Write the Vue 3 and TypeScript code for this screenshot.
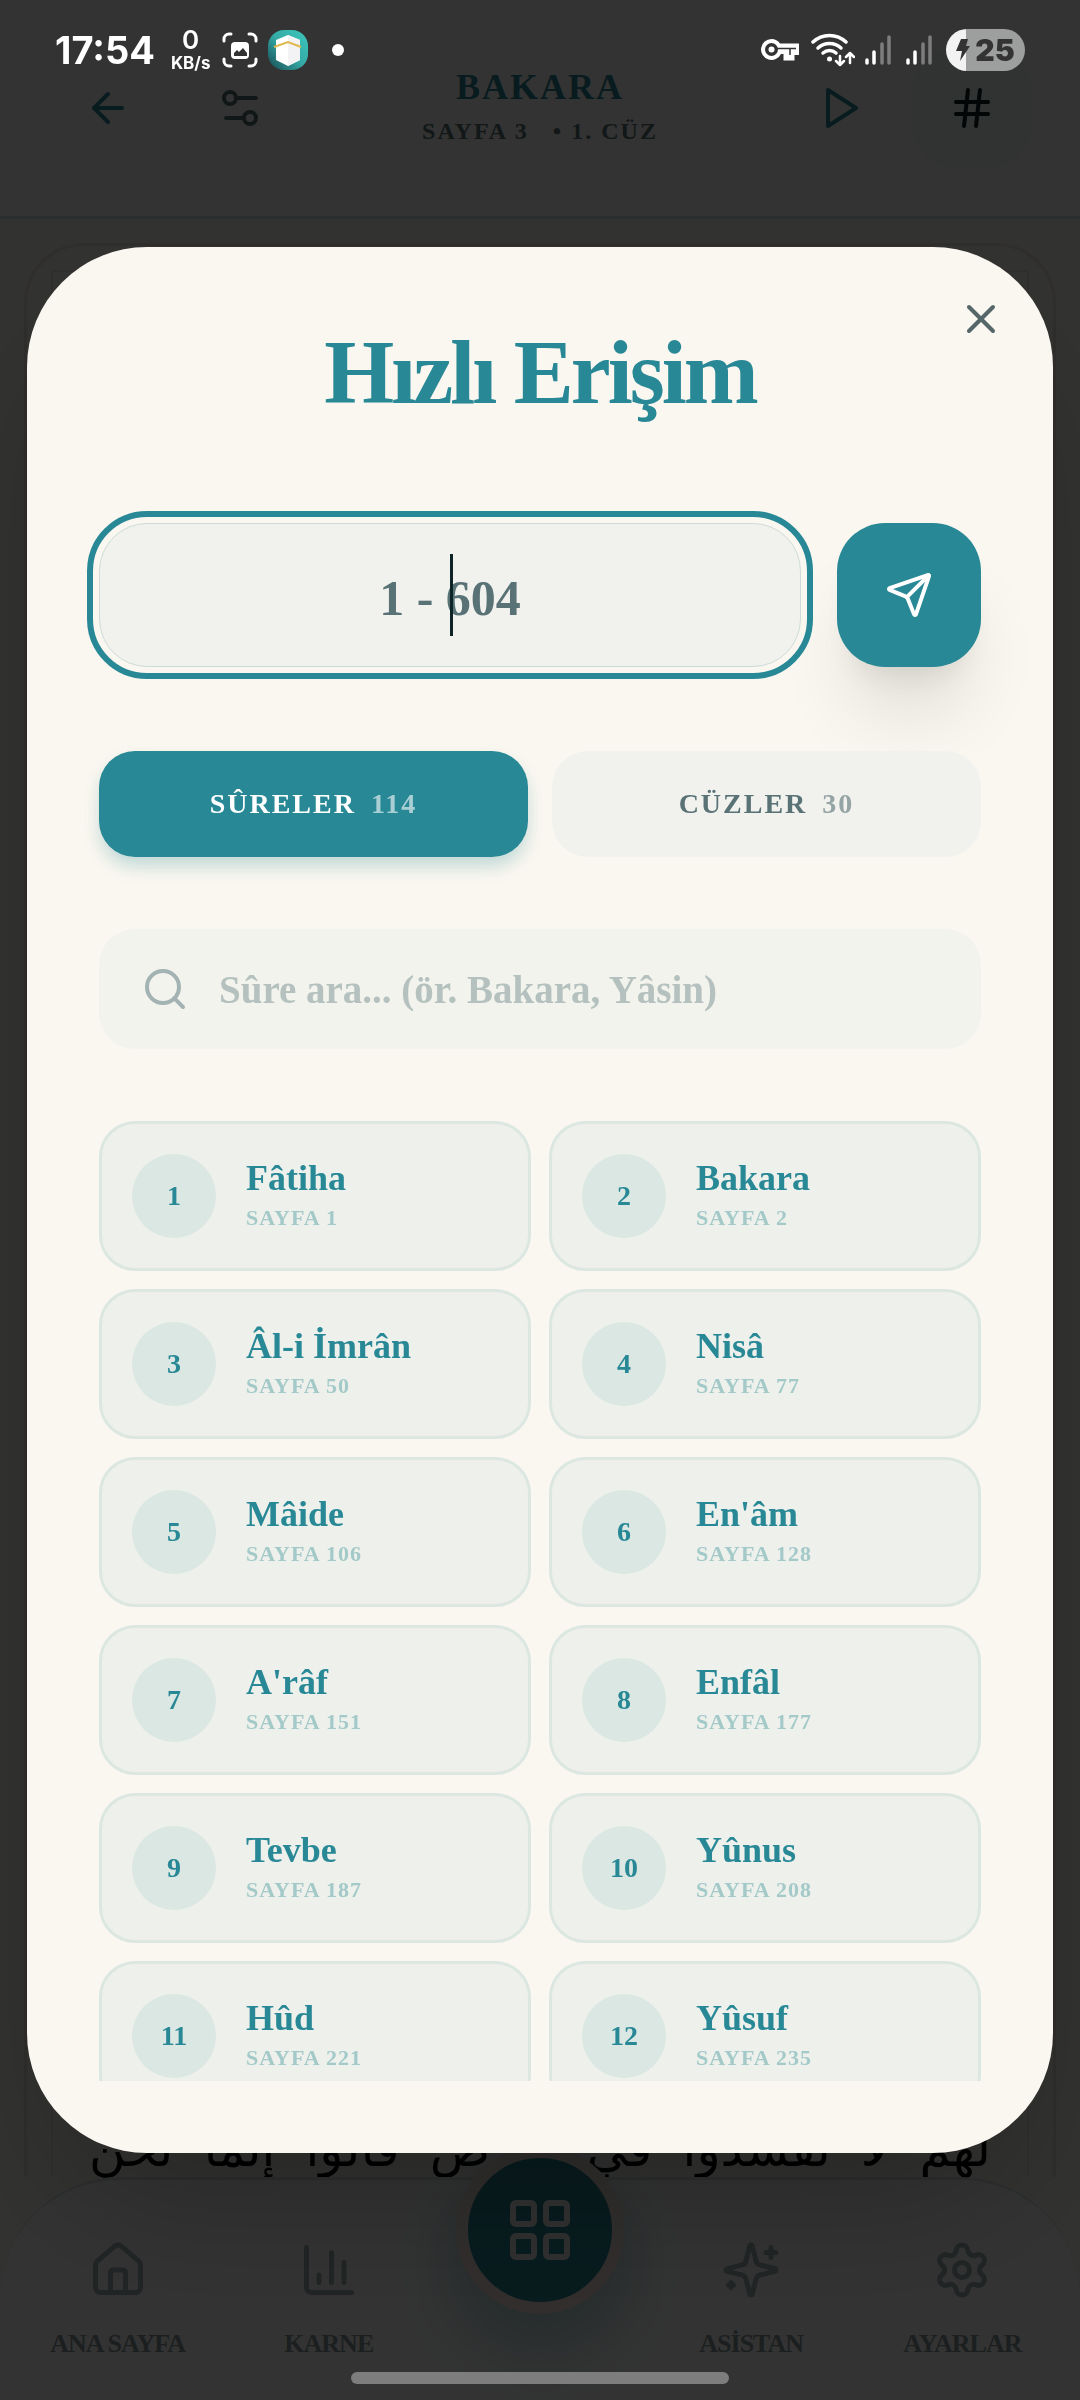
<script setup lang="ts">
import { ref } from 'vue'

interface Surah {
  no: number
  name: string
  page: number
}

interface NavItem {
  label: string
  paths: string[]
}

const surahs: Surah[] = [
  { no: 1, name: 'Fâtiha', page: 1 },
  { no: 2, name: 'Bakara', page: 2 },
  { no: 3, name: 'Âl-i İmrân', page: 50 },
  { no: 4, name: 'Nisâ', page: 77 },
  { no: 5, name: 'Mâide', page: 106 },
  { no: 6, name: "En'âm", page: 128 },
  { no: 7, name: "A'râf", page: 151 },
  { no: 8, name: 'Enfâl', page: 177 },
  { no: 9, name: 'Tevbe', page: 187 },
  { no: 10, name: 'Yûnus', page: 208 },
  { no: 11, name: 'Hûd', page: 221 },
  { no: 12, name: 'Yûsuf', page: 235 },
]

const leftNav: NavItem[] = [
  {
    label: 'ANA SAYFA',
    paths: [
      'M15 21v-8a1 1 0 0 0-1-1h-4a1 1 0 0 0-1 1v8',
      'M3 10a2 2 0 0 1 .709-1.528l7-5.999a2 2 0 0 1 2.582 0l7 5.999A2 2 0 0 1 21 10v9a2 2 0 0 1-2 2H5a2 2 0 0 1-2-2z',
    ],
  },
  {
    label: 'KARNE',
    paths: ['M3 3v16a2 2 0 0 0 2 2h16', 'M18 17V9', 'M13 17V5', 'M8 17v-3'],
  },
]

const rightNav: NavItem[] = [
  {
    label: 'ASİSTAN',
    paths: [
      'M9.937 15.5A2 2 0 0 0 8.5 14.063l-6.135-1.582a.5.5 0 0 1 0-.962L8.5 9.936A2 2 0 0 0 9.937 8.5l1.582-6.135a.5.5 0 0 1 .963 0L14.063 8.5A2 2 0 0 0 15.5 9.937l6.135 1.581a.5.5 0 0 1 0 .964L15.5 14.063a2 2 0 0 0-1.437 1.437l-1.582 6.135a.5.5 0 0 1-.963 0z',
      'M20 3v4',
      'M22 5h-4',
      'M4 17v2',
      'M5 18H3',
    ],
  },
  {
    label: 'AYARLAR',
    paths: [
      'M9.671 4.136a2.34 2.34 0 0 1 4.659 0 2.34 2.34 0 0 0 3.319 1.915 2.34 2.34 0 0 1 2.33 4.033 2.34 2.34 0 0 0 0 3.831 2.34 2.34 0 0 1-2.33 4.033 2.34 2.34 0 0 0-3.319 1.915 2.34 2.34 0 0 1-4.659 0 2.34 2.34 0 0 0-3.32-1.915 2.34 2.34 0 0 1-2.33-4.033 2.34 2.34 0 0 0 0-3.831A2.34 2.34 0 0 1 6.35 6.051a2.34 2.34 0 0 0 3.319-1.915',
      'M9 12a3 3 0 1 0 6 0a3 3 0 1 0-6 0',
    ],
  },
]

const page = ref('')
const query = ref('')
const tab = ref<'sure' | 'cuz'>('sure')
</script>

<template>
  <div class="app">
    <header class="top-bar">
      <div class="group">
        <button class="icon-btn" type="button" aria-label="Geri">
          <svg class="icon" viewBox="0 0 24 24"><path d="m12 19-7-7 7-7" /><path d="M19 12H5" /></svg>
        </button>
        <button class="icon-btn muted" type="button" aria-label="Görünüm ayarları">
          <svg class="icon" viewBox="0 0 24 24">
            <path d="M20 7h-9" /><path d="M14 17H5" /><circle cx="17" cy="17" r="3" /><circle cx="7" cy="7" r="3" />
          </svg>
        </button>
      </div>
      <div class="heading">
        <h1>BAKARA</h1>
        <p><span>SAYFA 3</span><span>• 1. CÜZ</span></p>
      </div>
      <div class="group">
        <button class="icon-btn" type="button" aria-label="Oynat">
          <svg class="icon" viewBox="0 0 24 24"><path d="M6 3 20 12 6 21z" /></svg>
        </button>
        <button class="icon-btn active" type="button" aria-label="Hızlı Erişim">
          <svg class="icon" viewBox="0 0 24 24">
            <path d="M4 9h16" /><path d="M4 15h16" /><path d="M10 3 8 21" /><path d="M16 3l-2 18" />
          </svg>
        </button>
      </div>
    </header>

    <main class="reader">
      <div class="sheet">
        <div class="sheet-inner">
          <p class="ayah" lang="ar" dir="rtl">لهم لا تفسدوا في الأرض قالوا إنما نحن</p>
        </div>
      </div>
    </main>

    <nav class="bottom-nav">
      <a v-for="item in leftNav" :key="item.label" class="nav-item" href="#">
        <svg class="icon nav-icon" viewBox="0 0 24 24"><path v-for="d in item.paths" :key="d" :d="d" /></svg>
        <span>{{ item.label }}</span>
      </a>
      <div class="fab-slot">
        <button class="fab" type="button" aria-label="Menü">
          <svg class="icon fab-icon" viewBox="0 0 24 24">
            <rect x="3" y="3" width="7" height="7" rx="1" /><rect x="14" y="3" width="7" height="7" rx="1" />
            <rect x="14" y="14" width="7" height="7" rx="1" /><rect x="3" y="14" width="7" height="7" rx="1" />
          </svg>
        </button>
      </div>
      <a v-for="item in rightNav" :key="item.label" class="nav-item" href="#">
        <svg class="icon nav-icon" viewBox="0 0 24 24"><path v-for="d in item.paths" :key="d" :d="d" /></svg>
        <span>{{ item.label }}</span>
      </a>
    </nav>

    <div class="overlay">
      <section class="dialog" role="dialog" aria-modal="true" aria-labelledby="dialog-title">
        <button class="close" type="button" aria-label="Kapat">
          <svg class="icon" viewBox="0 0 24 24"><path d="M18 6 6 18" /><path d="m6 6 12 12" /></svg>
        </button>
        <h2 id="dialog-title">Hızlı Erişim</h2>

        <form class="jump" @submit.prevent>
          <div class="page-field">
            <input v-model="page" type="text" inputmode="numeric" placeholder="1 - 604" aria-label="Sayfa numarası" />
            <span class="caret"></span>
          </div>
          <button class="send" type="submit" aria-label="Git">
            <svg class="icon" viewBox="0 0 24 24">
              <path d="M14.536 21.686a.5.5 0 0 0 .937-.024l6.5-19a.496.496 0 0 0-.635-.635l-19 6.5a.5.5 0 0 0-.024.937l7.93 3.18a2 2 0 0 1 1.112 1.11z" />
              <path d="m21.854 2.147-10.94 10.939" />
            </svg>
          </button>
        </form>

        <div class="tabs">
          <button type="button" :class="{ on: tab === 'sure' }" @click="tab = 'sure'">
            SÛRELER <span>114</span>
          </button>
          <button type="button" :class="{ on: tab === 'cuz' }" @click="tab = 'cuz'">
            CÜZLER <span>30</span>
          </button>
        </div>

        <label class="search">
          <svg class="icon" viewBox="0 0 24 24"><circle cx="11" cy="11" r="8" /><path d="m21 21-4.300-4.300" /></svg>
          <input v-model="query" type="text" placeholder="Sûre ara... (ör. Bakara, Yâsin)" aria-label="Sûre ara" />
        </label>

        <div class="list">
          <button v-for="s in surahs" :key="s.no" class="card" type="button">
            <span class="num">{{ s.no }}</span>
            <span class="info">
              <strong>{{ s.name }}</strong>
              <small>SAYFA {{ s.page }}</small>
            </span>
          </button>
        </div>
      </section>
    </div>

    <div class="status">
      <div class="status-left">
        <span class="time">17:54</span>
        <span class="rate"><b>0</b><span>KB/s</span></span>
        <svg class="shot" viewBox="0 0 36 36">
          <path d="M2 9V7a5 5 0 0 1 5-5h2M27 2h2a5 5 0 0 1 5 5v2M34 27v2a5 5 0 0 1-5 5h-2M9 34H7a5 5 0 0 1-5-5v-2" fill="none" stroke="#fff" stroke-width="3" stroke-linecap="round" />
          <rect x="9" y="10" width="18" height="17" rx="4" fill="#fff" />
          <path d="M12 24v-3l3-3 2 2 4-4 4 5v3z" fill="#333" />
        </svg>
        <svg class="kaaba" viewBox="0 0 40 40">
          <defs>
            <linearGradient id="tile" x1="1" y1="0" x2="0" y2="1">
              <stop offset="0" stop-color="#3cc8be" /><stop offset=".5" stop-color="#35a9a6" /><stop offset="1" stop-color="#17484f" />
            </linearGradient>
          </defs>
          <rect width="40" height="40" rx="16" fill="url(#tile)" />
          <path d="M20 5 32 10v20l-12 6-12-6V10z" fill="#fff" />
          <path d="M20 5 32 10v20l-12 6z" fill="#f3f3f5" />
          <path d="m6 17 14-5 13 5" fill="none" stroke="#e0b94f" stroke-width="2" />
        </svg>
        <span class="dot"></span>
      </div>
      <div class="status-right">
        <svg class="key" viewBox="0 0 38 22">
          <path fill-rule="evenodd" d="M10.500 0a10.500 10.500 0 1 0 9.500 15h2.500v6.500h11V16H38V4.500H19A10.500 10.500 0 0 0 10.500 0zm0 4a6.500 6.500 0 1 1 0 13 6.500 6.500 0 0 1 0-13z" fill="#fff" />
          <path d="M16 9.500h19M29 9.500V16" fill="none" stroke="#333" stroke-width="1.500" />
          <circle cx="10.500" cy="10.500" r="3" fill="#fff" />
        </svg>
        <svg class="wifi" viewBox="0 0 44 34">
          <g fill="none" stroke="#fff" stroke-width="3.500" stroke-linecap="round">
            <path d="M2 9a24 24 0 0 1 33 0" /><path d="M7 15a17 17 0 0 1 23 0" /><path d="M12 20a10 10 0 0 1 13 0" />
            <path d="M29 23v9m-4-4 4 4 4-4M39 30V20m-4 4 4-4 4 4" stroke-width="2.500" stroke-linejoin="round" />
          </g>
          <circle cx="18.500" cy="26" r="2.500" fill="#fff" />
        </svg>
        <svg v-for="n in 2" :key="n" class="signal" viewBox="0 0 28 30" stroke-width="3.500" stroke-linecap="round">
          <path d="M3 25v3M10 17v11" stroke="#fff" /><path d="M18 9v19M25 2v26" stroke="#7d7d7d" />
        </svg>
        <span class="battery">
          <svg viewBox="0 0 14 22"><path d="M5 0h7l-2 7h4L4 22l2-10H0z" fill="#333" /></svg>
          <b>25</b>
        </span>
      </div>
    </div>
    <span class="gesture"></span>
  </div>
</template>

<style>
body {
  margin: 0;
}
</style>

<style scoped>
* {
  box-sizing: border-box;
}
button,
input {
  font: inherit;
  color: inherit;
  border: 0;
  background: none;
  padding: 0;
  margin: 0;
}
h1,
h2,
p {
  margin: 0;
}
a {
  color: inherit;
  text-decoration: none;
}
.app {
  --teal: #288896;
  --slate: #587275;
  position: relative;
  display: flex;
  flex-direction: column;
  min-height: 100vh;
  overflow: hidden;
  background: #faf7f0;
  font-family: 'Liberation Serif', 'Times New Roman', serif;
  font-weight: 700;
}
.icon {
  display: block;
  width: 48px;
  height: 48px;
  fill: none;
  stroke: currentColor;
  stroke-width: 2;
  stroke-linecap: round;
  stroke-linejoin: round;
}

/* Reader page */
.top-bar {
  display: flex;
  align-items: center;
  justify-content: space-between;
  padding: 48px;
  background: #fff;
  border-bottom: 3px solid #d8e6e6;
  color: var(--teal);
}
.group {
  display: flex;
  gap: 12px;
}
.icon-btn {
  display: grid;
  place-items: center;
  width: 120px;
  height: 120px;
  border-radius: 42px;
}
.icon-btn.muted {
  color: #587073;
}
.icon-btn.active {
  background: #f6faf8;
  color: #0a1e23;
}
.heading {
  text-align: center;
}
.heading h1 {
  font-size: 36px;
  line-height: 40px;
  letter-spacing: 2px;
}
.heading p {
  display: flex;
  gap: 24px;
  margin-top: 6px;
  font-size: 24px;
  line-height: 36px;
  letter-spacing: 2px;
  color: #5a7376;
}
.reader {
  display: flex;
  flex: 1;
  padding: 24px 24px 0;
}
.sheet {
  display: flex;
  flex: 1;
  padding: 24px 24px 0;
  border: 3px solid #e9e5da;
  border-bottom: 0;
  border-radius: 60px 60px 0 0;
}
.sheet-inner {
  display: flex;
  flex: 1;
  align-items: flex-end;
  border: 2px solid #ebe6da;
  border-bottom: 0;
  padding: 0 36px;
}
.ayah {
  flex: 1;
  font-family: 'DejaVu Sans', sans-serif;
  font-weight: 400;
  font-size: 50px;
  line-height: 56px;
  text-align: justify;
  text-align-last: justify;
  color: #000;
}
.bottom-nav {
  display: grid;
  grid-template-columns: repeat(5, 1fr);
  padding: 60px 12px 40px;
  background: #fff;
  border-top: 3px solid #dce9e9;
  border-radius: 120px 120px 0 0;
  color: #a6b6b6;
}
.nav-item {
  display: flex;
  flex-direction: column;
  align-items: center;
  gap: 28px;
  font-size: 26px;
  line-height: 32px;
  letter-spacing: -1px;
}
.nav-item span {
  color: #8a9c9c;
}
.nav-icon {
  width: 60px;
  height: 60px;
}
.fab-slot {
  display: flex;
  justify-content: center;
  height: 60px;
}
.fab {
  display: grid;
  place-items: center;
  width: 168px;
  height: 168px;
  margin-top: -94px;
  border: 12px solid #f2e6de;
  border-radius: 50%;
  background: var(--teal);
  box-shadow: 0 30px 75px rgba(40, 136, 150, 0.4);
  color: #f0f0f0;
}
.fab-icon {
  width: 72px;
  height: 72px;
}

/* Quick access dialog */
.overlay {
  position: fixed;
  inset: 0;
  display: flex;
  align-items: center;
  justify-content: center;
  padding: 0 27px;
  background: rgba(0, 0, 0, 0.8);
}
.dialog {
  position: relative;
  flex: 1;
  padding: 72px;
  border-radius: 120px;
  background: #faf7f0;
  box-shadow: 0 75px 150px -36px rgba(0, 0, 0, 0.25);
}
.close {
  position: absolute;
  top: 48px;
  right: 48px;
  color: #566769;
}
h2 {
  margin-bottom: 96px;
  font-size: 90px;
  line-height: 108px;
  letter-spacing: -3px;
  text-align: center;
  color: var(--teal);
}
.jump {
  display: flex;
  gap: 36px;
  margin-bottom: 84px;
}
.page-field {
  position: relative;
  flex: 1;
  min-width: 0;
}
.page-field input {
  display: block;
  width: 100%;
  height: 144px;
  padding-top: 6px;
  border: 1px solid #cddcd9;
  border-radius: 48px;
  background: #f1f1ed;
  outline: 6px solid var(--teal);
  outline-offset: 6px;
  font-size: 50px;
  text-align: center;
  color: #0f2427;
}
.page-field input::placeholder {
  color: var(--slate);
  opacity: 1;
}
.caret {
  position: absolute;
  top: 31px;
  left: 50%;
  width: 3px;
  height: 82px;
  background: #0f2427;
}
.send {
  display: grid;
  place-items: center;
  width: 144px;
  height: 144px;
  border-radius: 48px;
  background: var(--teal);
  box-shadow: 0 60px 75px -15px rgba(0, 0, 0, 0.1), 0 24px 30px -18px rgba(0, 0, 0, 0.1);
  color: #fff;
}
.tabs {
  display: grid;
  grid-template-columns: 1fr 1fr;
  gap: 24px;
  margin-bottom: 72px;
}
.tabs button {
  height: 106px;
  border-radius: 36px;
  background: #f1f1ed;
  font-size: 28px;
  letter-spacing: 2px;
  color: var(--slate);
}
.tabs button.on {
  background: var(--teal);
  box-shadow: 0 12px 18px -3px rgba(40, 136, 150, 0.22), 0 6px 18px rgba(40, 136, 150, 0.08);
  color: #fff;
}
.tabs span {
  margin-left: 6px;
  opacity: 0.6;
}
.search {
  display: flex;
  align-items: center;
  gap: 30px;
  height: 120px;
  margin-bottom: 72px;
  padding: 0 42px;
  border-radius: 36px;
  background: #f2f3ec;
  color: #a3b2b2;
}
.search input {
  flex: 1;
  min-width: 0;
  height: 100%;
  outline: 0;
  font-size: 39px;
  color: #0f2427;
}
.search input::placeholder {
  color: #b5c1bf;
  opacity: 1;
}
.list {
  display: grid;
  grid-template-columns: 1fr 1fr;
  align-content: start;
  gap: 18px;
  max-height: 40vh;
  overflow-y: auto;
  scrollbar-width: none;
}
.card {
  display: flex;
  align-items: center;
  gap: 30px;
  height: 150px;
  padding: 0 30px;
  border: 3px solid #dce7e1;
  border-radius: 36px;
  background: #edf0eb;
  text-align: left;
  color: var(--teal);
}
.num {
  display: grid;
  place-items: center;
  width: 84px;
  height: 84px;
  border-radius: 50%;
  background: #dae7e2;
  font-size: 28px;
}
.info {
  display: flex;
  flex-direction: column;
  gap: 4px;
}
.info strong {
  font-size: 36px;
  line-height: 40px;
}
.info small {
  font-size: 22px;
  line-height: 32px;
  letter-spacing: 1px;
  color: #a3c9c9;
}

/* System bars */
.status {
  position: absolute;
  top: 0;
  left: 0;
  right: 0;
  display: flex;
  align-items: center;
  justify-content: space-between;
  height: 100px;
  padding: 0 55px;
  font-family: Inter, sans-serif;
  color: #fff;
}
.status-left,
.status-right {
  display: flex;
  align-items: center;
}
.time {
  font-size: 38px;
}
.rate {
  display: flex;
  flex-direction: column;
  align-items: center;
  margin: 0 11px 0 16px;
  font-size: 17px;
  line-height: 20px;
}
.rate b {
  font-size: 26px;
  line-height: 26px;
  font-weight: 600;
}
.shot {
  width: 36px;
  height: 36px;
}
.kaaba {
  width: 40px;
  height: 40px;
  margin: 0 24px 0 10px;
}
.dot {
  width: 12px;
  height: 12px;
  border-radius: 50%;
  background: #fff;
}
.key {
  width: 38px;
  height: 22px;
  margin-right: 12px;
}
.wifi {
  width: 44px;
  height: 34px;
  margin-right: 9px;
}
.signal {
  width: 28px;
  height: 30px;
  margin-right: 13px;
  fill: none;
}
.battery {
  display: flex;
  align-items: center;
  justify-content: center;
  gap: 5px;
  width: 79px;
  height: 42px;
  border-radius: 21px;
  background: linear-gradient(90deg, #f2f2f2 25%, #9d9e9e 25%);
  font-size: 30px;
  line-height: 42px;
  color: #333;
}
.battery svg {
  width: 14px;
  height: 22px;
}
.gesture {
  position: absolute;
  left: 50%;
  bottom: 16px;
  width: 35%;
  height: 12px;
  border-radius: 6px;
  background: #7d7d7d;
  transform: translateX(-50%);
}
</style>
